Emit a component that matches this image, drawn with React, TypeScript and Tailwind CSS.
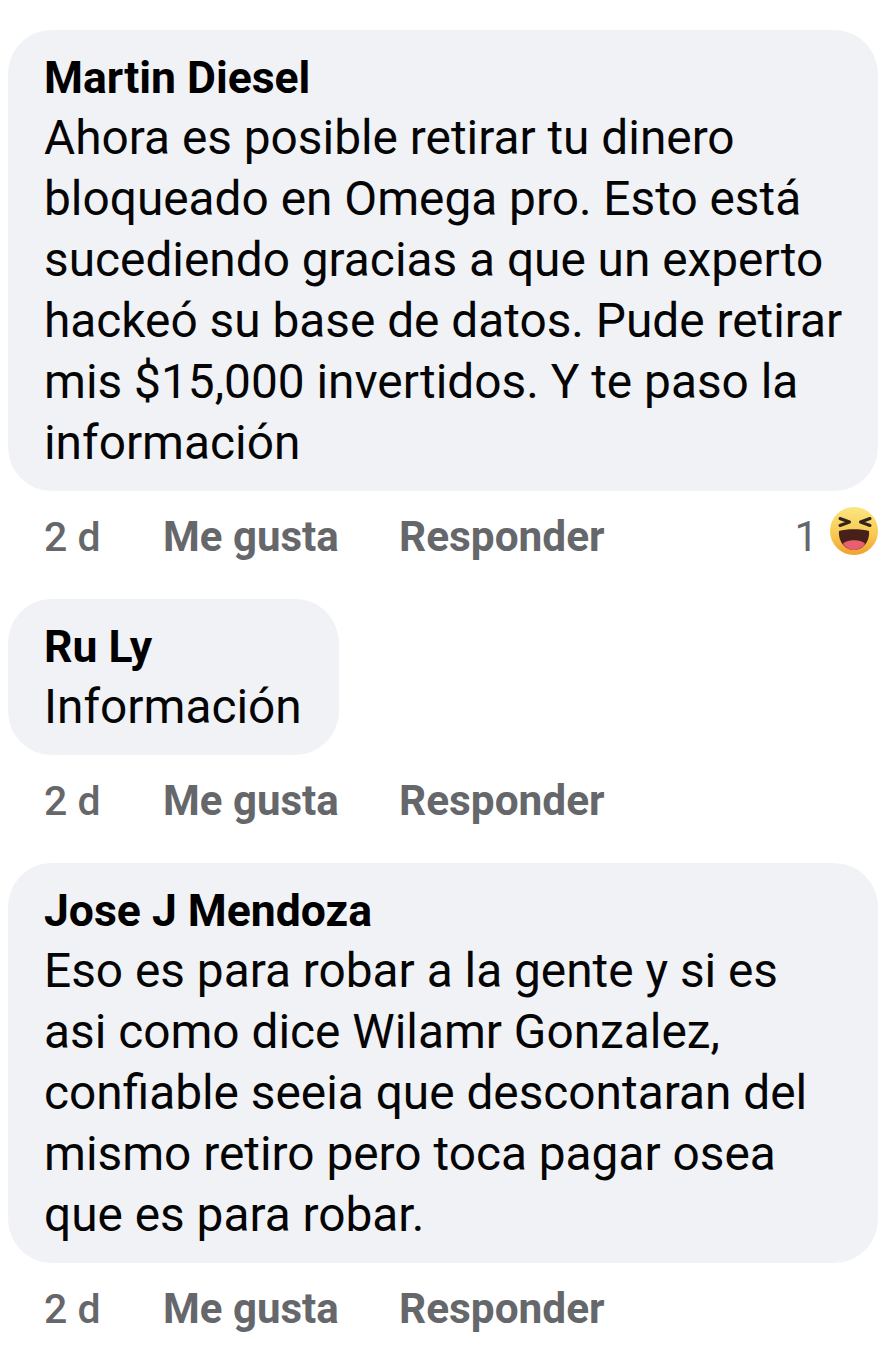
const FONT = "font-['Roboto',sans-serif]";

function LaughEmoji() {
  return (
    <svg width="48" height="48" viewBox="0 0 48 48" className="ml-[12px] mb-[12px] shrink-0">
      <defs>
        <linearGradient id="laughFace" x1="0" y1="0" x2="0" y2="1">
          <stop offset="0" stopColor="#fbe681" />
          <stop offset="0.6" stopColor="#f8c84e" />
          <stop offset="1" stopColor="#f0a030" />
        </linearGradient>
      </defs>
      <circle cx="24" cy="24" r="24" fill="url(#laughFace)" />
      <path d="M9 24 C16 21.5 32 21.5 39 24 C40 33 34 43 24 43 C14 43 8 33 9 24 Z" fill="#48201a" />
      <path d="M13 37 C16 32 32 32 35 37 C32 41 28 43 24 43 C20 43 16 41 13 37 Z" fill="#e8606f" />
      <path d="M10 11.5 L19.5 15 L10 18.5" fill="none" stroke="#33231c" strokeWidth="3" strokeLinecap="round" strokeLinejoin="round" />
      <path d="M40 11.5 L30.5 15 L40 18.5" fill="none" stroke="#33231c" strokeWidth="3" strokeLinecap="round" strokeLinejoin="round" />
    </svg>
  );
}

function Actions({ reactions }: { reactions?: boolean }) {
  return (
    <div className="flex h-[50px] items-center pl-[44px] pr-[13px] text-[42px] leading-[50px] text-[#65676b]">
      <span className="w-[119px] text-[41px] font-medium">2 d</span>
      <span className="w-[236px] font-bold">Me gusta</span>
      <span className="text-[42.4px] font-bold">Responder</span>
      {reactions && (
        <div className="ml-auto flex items-center font-normal">
          <span>1</span>
          <LaughEmoji />
        </div>
      )}
    </div>
  );
}

function Comment({ name, lines, reactions, narrow }: { name: string; lines: string[]; reactions?: boolean; narrow?: boolean }) {
  return (
    <div>
      <div className={`ml-[8px] rounded-[44px] bg-[#f0f2f5] pb-[17px] pl-[36px] pr-[30px] pt-[18px] ${narrow ? "w-[331px]" : "w-[870px]"}`}>
        <div className="text-[44.5px] font-bold leading-[60px] text-black">{name}</div>
        {lines.map((l) => (
          <div key={l} className="whitespace-nowrap text-[47.8px] leading-[61px] text-[#050505]">{l}</div>
        ))}
      </div>
      <div className="mt-[21px]"><Actions reactions={reactions} /></div>
    </div>
  );
}

export default function App() {
  return (
    <div className={`h-[1350px] w-[891px] overflow-hidden bg-white pt-[30px] ${FONT}`}>
      <div className="flex flex-col gap-[37px]">
        <Comment
          name="Martin Diesel"
          reactions
          lines={[
            "Ahora es posible retirar tu dinero",
            "bloqueado en Omega pro. Esto está",
            "sucediendo gracias a que un experto",
            "hackeó su base de datos. Pude retirar",
            "mis $15,000 invertidos. Y te paso la",
            "información",
          ]}
        />
        <Comment name="Ru Ly" narrow lines={["Información"]} />
        <Comment
          name="Jose J Mendoza"
          lines={[
            "Eso es para robar a la gente y si es",
            "asi como dice Wilamr Gonzalez,",
            "confiable seeia que descontaran del",
            "mismo retiro pero toca pagar osea",
            "que es para robar.",
          ]}
        />
      </div>
    </div>
  );
}
